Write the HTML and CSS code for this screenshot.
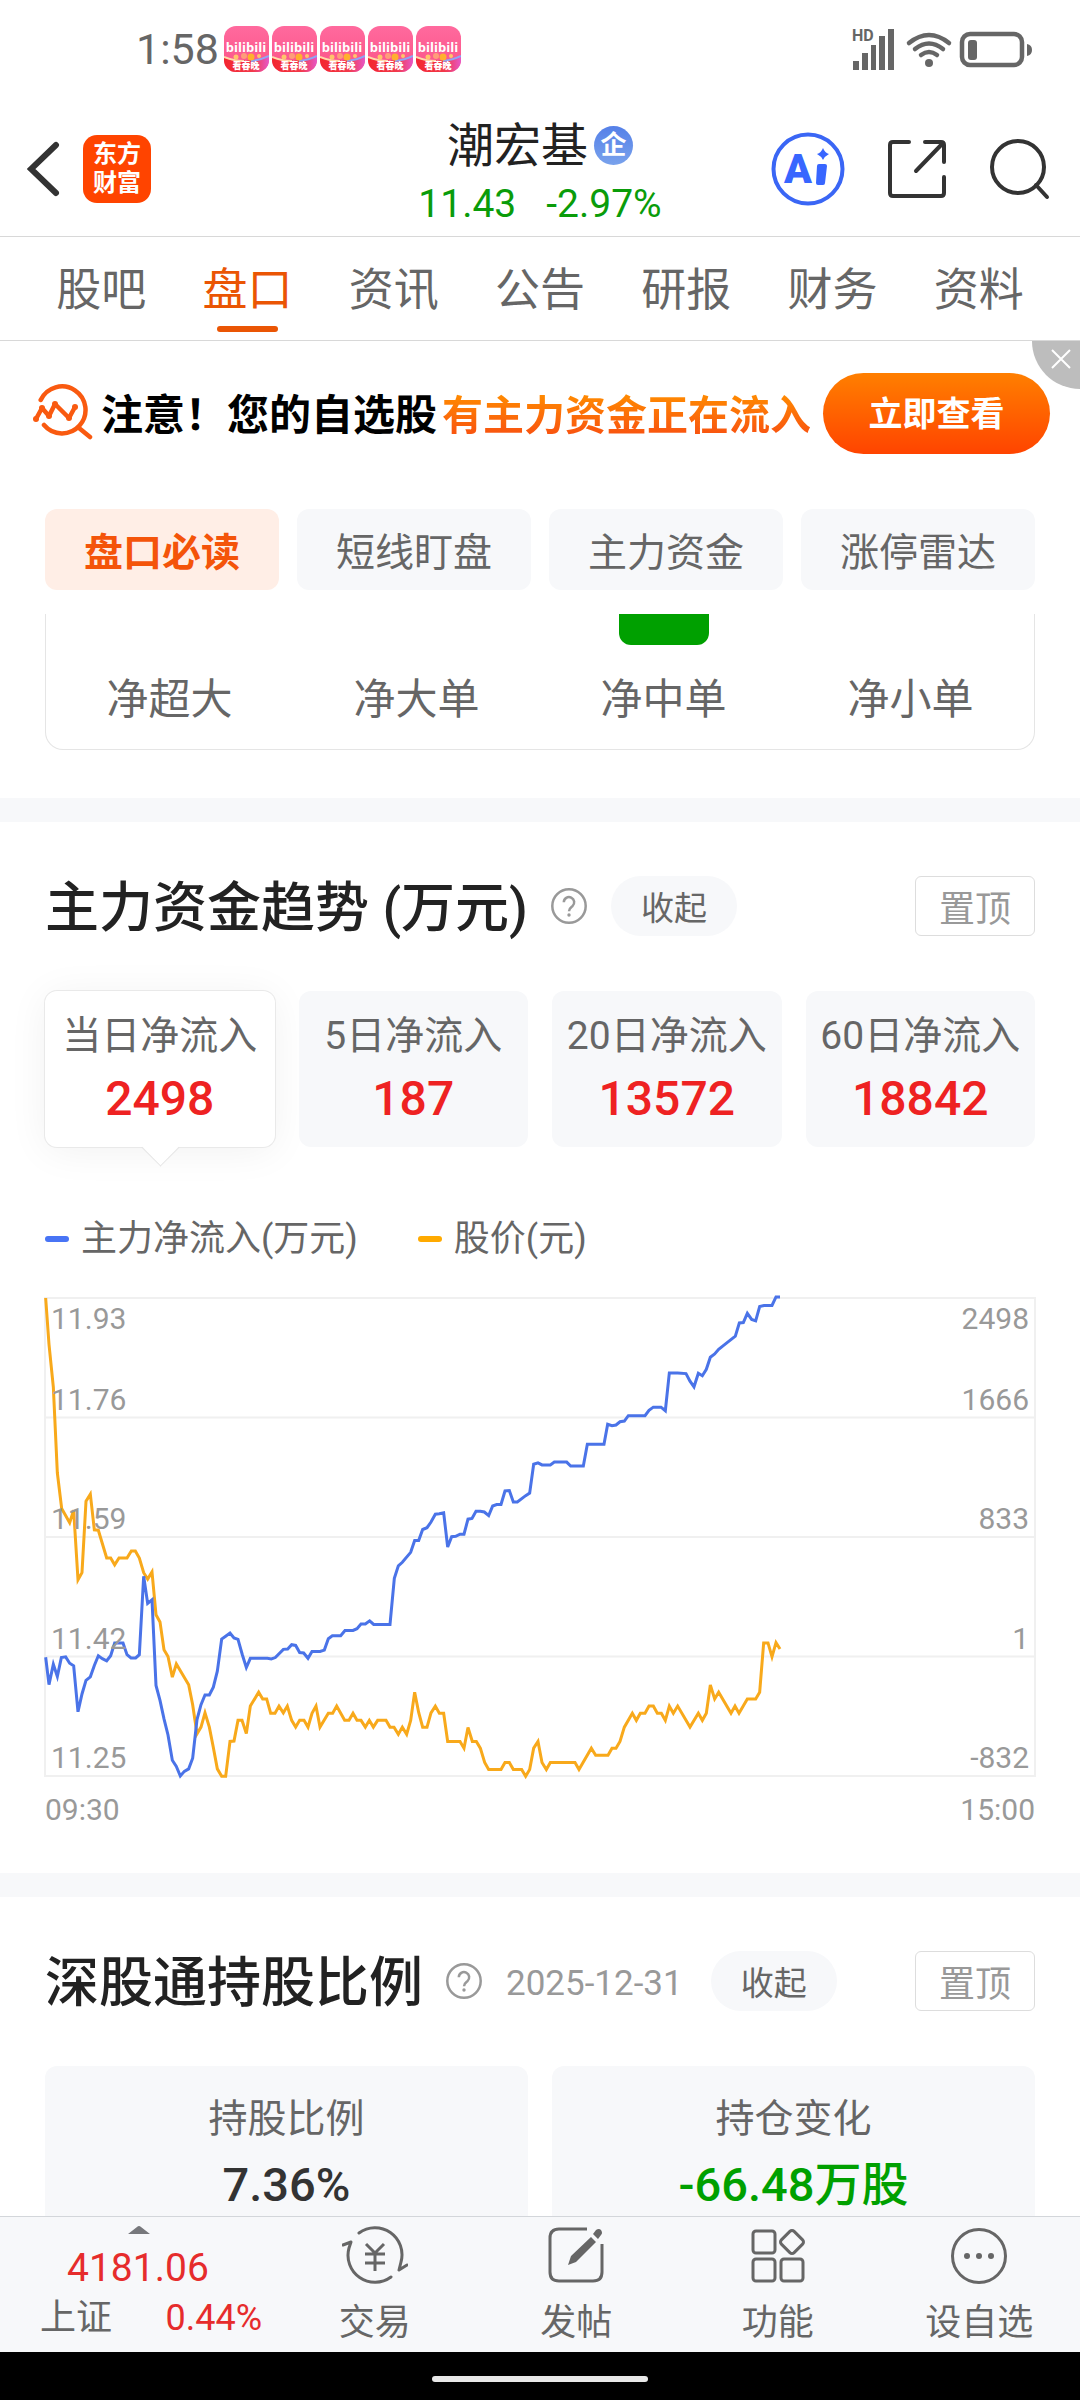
FILE: index.html
```html
<!DOCTYPE html>
<html lang="zh-CN">
<head>
    <meta charset="UTF-8">
    <meta name="viewport" content="width=device-width, initial-scale=1">
    <title>潮宏基 - 盘口</title>
    <link rel="stylesheet" href="styles.css">
</head>
<body>
<svg class="defs" aria-hidden="true">
    <defs>
        <linearGradient id="bili-pink" x1="0" y1="0" x2="0" y2="1">
            <stop offset="0" stop-color="#ff6a9e"/>
            <stop offset="1" stop-color="#fb5287"/>
        </linearGradient>
        <linearGradient id="bili-red" x1="0" y1="0" x2="1" y2="0">
            <stop offset="0" stop-color="#f3262f"/>
            <stop offset="0.65" stop-color="#f23a4c"/>
            <stop offset="1" stop-color="#e657c8"/>
        </linearGradient>
        <clipPath id="bili-clip"><rect width="45" height="46" rx="12"/></clipPath>
        <symbol id="bili" viewBox="0 0 45 46">
            <g clip-path="url(#bili-clip)">
                <rect width="45" height="46" fill="url(#bili-pink)"/>
                <path d="M0 31Q22 38 45 31V46H0Z" fill="url(#bili-red)"/>
                <path d="M0 31Q10 35 20 35" fill="none" stroke="#ffd9a8" stroke-width="2"/>
                <path d="M27 35Q37 34 45 30" fill="none" stroke="#8fa4f4" stroke-width="2"/>
                <circle cx="12" cy="31" r="2.5" fill="#ffc46b"/>
                <circle cx="20" cy="30" r="3" fill="#ff9c7a"/>
                <circle cx="27" cy="31" r="3.5" fill="#ffb02e"/>
                <circle cx="35" cy="30" r="2" fill="#ffc46b"/>
                <text class="bili-name" x="22" y="26">bilibili</text>
                <text class="bili-tag" x="22" y="43">看春晚</text>
            </g>
        </symbol>
        <symbol id="help" viewBox="0 0 36 36">
            <circle cx="18" cy="18" r="16.7" fill="none" stroke="#999" stroke-width="2.5"/>
            <path d="M12.8 14.2a5.2 5.2 0 1 1 8.6 4c-2 1.600-3.400 2.500-3.400 5" fill="none" stroke="#999" stroke-width="2.5"/>
            <circle cx="18" cy="27" r="1.7" fill="#999"/>
        </symbol>
    </defs>
</svg>

<div class="app">
    <div class="status">
        <span class="clock">1:58</span>
        <div class="notices">
            <svg class="bili"><use href="#bili"/></svg>
            <svg class="bili"><use href="#bili"/></svg>
            <svg class="bili"><use href="#bili"/></svg>
            <svg class="bili"><use href="#bili"/></svg>
            <svg class="bili"><use href="#bili"/></svg>
        </div>
        <svg class="signals" viewBox="0 0 182 44" aria-hidden="true">
            <g fill="#666">
                <text class="hd" x="0" y="14">HD</text>
                <path d="M1 34h6v9H1zM10 26h6v17h-6zM19 18h5v25h-5zM27 9h6v34h-6zM36 2h6v41h-6z"/>
                <circle cx="77" cy="36" r="4"/>
                <rect x="116" y="13" width="9" height="20" rx="3"/>
                <path d="M175 17q5 1 5 6t-5 6z"/>
            </g>
            <g fill="none" stroke="#666" stroke-width="4.5" stroke-linecap="round">
                <path d="M57 16q20-16 40 0M63 22q14-11 28 0M69 28q8-6 16 0"/>
                <rect x="110" y="7" width="60" height="31" rx="8"/>
            </g>
        </svg>
    </div>

    <header class="header">
        <div class="header-left">
            <button class="icon-btn" aria-label="返回">
                <svg width="34" height="60" viewBox="0 0 34 60"><path d="M29 6 4 30l25 24" fill="none" stroke="#333" stroke-width="6" stroke-linecap="round"/></svg>
            </button>
            <a class="logo" href="#"><span>东方</span><span>财富</span></a>
        </div>
        <div class="stock">
            <h1 class="stock-name">潮宏基<span class="stock-badge">企</span></h1>
            <p class="stock-price"><span>11.43</span><span>-2.97%</span></p>
        </div>
        <div class="header-right">
            <button class="icon-btn" aria-label="智能助手">
                <svg width="74" height="74" viewBox="0 0 74 74">
                    <circle cx="37" cy="37" r="34.5" fill="none" stroke="#3a66f5" stroke-width="4"/>
                    <text class="ai" x="13" y="51">A</text>
                    <path d="M48 32h6q2 0 2 2l-2 17q0 2-2 2h-5q-2 0-2-2l1-17q0-2 2-2zM52 16q2 5 6 6-4 2-6 6-2-4-6-6 4-1 6-6z" fill="#3866ff"/>
                </svg>
            </button>
            <button class="icon-btn" aria-label="分享">
                <svg width="60" height="60" viewBox="0 0 60 60" fill="none" stroke="#333" stroke-width="4" stroke-linecap="round" stroke-linejoin="round">
                    <path d="M22 3H6Q3 3 3 6v48q0 3 3 3h48q3 0 3-3V38M38 3h16q3 0 3 3v17M56 4 29 32"/>
                </svg>
            </button>
            <button class="icon-btn" aria-label="搜索">
                <svg width="62" height="62" viewBox="0 0 62 62" fill="none" stroke="#333" stroke-width="4" stroke-linecap="round">
                    <circle cx="29" cy="29" r="26"/><path d="m47 47 11 12"/>
                </svg>
            </button>
        </div>
    </header>

    <nav class="tabs">
        <a class="tab" href="#">股吧</a>
        <a class="tab active" href="#">盘口</a>
        <a class="tab" href="#">资讯</a>
        <a class="tab" href="#">公告</a>
        <a class="tab" href="#">研报</a>
        <a class="tab" href="#">财务</a>
        <a class="tab" href="#">资料</a>
    </nav>

    <main class="content">
        <div class="banner">
            <svg class="banner-icon" viewBox="0 0 60 60" aria-hidden="true">
                <g fill="none" stroke="#f95a10" stroke-width="4.5" stroke-linecap="round" stroke-linejoin="round">
                    <path d="M7.7 17A23.5 23.5 0 1 1 11 42M46 45l11 9"/>
                    <path d="M3 36 9 25l7 8 6-12 14 14 6-11"/>
                </g>
                <g fill="#f95a10"><circle cx="3" cy="36" r="3"/><circle cx="9" cy="25" r="3"/><circle cx="16" cy="33" r="3"/><circle cx="22" cy="21" r="3"/><circle cx="36" cy="35" r="3"/><circle cx="42" cy="24" r="3"/></g>
            </svg>
            <p class="banner-text">注意！您的自选股</p>
            <p class="banner-text hot">有主力资金正在流入</p>
            <button class="banner-btn">立即查看</button>
            <button class="banner-close" aria-label="关闭">
                <svg width="20" height="20" viewBox="0 0 20 20"><path d="m1 1 18 18M19 1 1 19" stroke="#fff" stroke-width="2"/></svg>
            </button>
        </div>

        <div class="pills">
            <button class="pill active">盘口必读</button>
            <button class="pill">短线盯盘</button>
            <button class="pill">主力资金</button>
            <button class="pill">涨停雷达</button>
        </div>

        <div class="orders">
            <div class="order">净超大</div>
            <div class="order">净大单</div>
            <div class="order"><span class="order-bar"></span>净中单</div>
            <div class="order">净小单</div>
        </div>

        <section class="section">
            <div class="section-head">
                <h2>主力资金趋势 (万元)</h2>
                <svg class="help"><use href="#help"/></svg>
                <button class="fold">收起</button>
                <button class="pin">置顶</button>
            </div>

            <div class="flows">
                <button class="flow active"><span>当日净流入</span><b>2498</b></button>
                <button class="flow"><span>5日净流入</span><b>187</b></button>
                <button class="flow"><span>20日净流入</span><b>13572</b></button>
                <button class="flow"><span>60日净流入</span><b>18842</b></button>
            </div>

            <div class="legend">
                <span class="legend-item inflow">主力净流入(万元)</span>
                <span class="legend-item price">股价(元)</span>
            </div>

            <div class="chart">
                <svg class="chart-lines" viewBox="45 50 2970 1340" preserveAspectRatio="none">
                    <path class="grid-line" d="M45 50H3015V1390H45ZM45 385H3015M45 720H3015M45 1055H3015"/>
                    <polyline class="line price-line" points="47,50 57,180 70,300 82,540 95,640 119,680 131,645 144,840 156,820 168,620 181,600 193,700 205,701 230,779 242,779 254,798 267,779 291,779 304,759 316,759 328,779 341,820 353,838 366,818 378,938 390,958 402,1036 414,1055 427,1113 439,1076 476,1134 488,1190 501,1272 513,1253 525,1213 538,1253 550,1310 562,1370 575,1391 587,1391 600,1293 612,1292 624,1234 636,1234 649,1271 661,1194 686,1155 698,1174 710,1174 722,1214 735,1214 747,1194 760,1213 772,1194 785,1234 797,1253 809,1234 822,1234 834,1253 846,1214 858,1194 870,1253 895,1214 908,1214 920,1194 944,1234 957,1234 969,1214 981,1234 993,1234 1006,1253 1018,1234 1030,1253 1043,1234 1068,1234 1080,1253 1092,1253 1105,1273 1117,1253 1130,1273 1142,1234 1154,1155 1166,1212 1178,1253 1191,1253 1203,1213 1216,1194 1228,1214 1241,1214 1253,1293 1290,1293 1302,1312 1314,1254 1327,1293 1339,1293 1351,1312 1364,1352 1376,1372 1413,1372 1425,1352 1438,1352 1450,1372 1475,1372 1487,1391 1499,1372 1511,1312 1524,1293 1536,1352 1549,1372 1561,1352 1635,1352 1647,1372 1684,1312 1697,1332 1734,1332 1746,1312 1758,1312 1770,1293 1783,1253 1807,1214 1819,1234 1831,1214 1845,1214 1857,1194 1870,1194 1882,1214 1894,1214 1906,1234 1918,1194 1930,1214 1943,1194 1980,1253 2005,1214 2017,1234 2029,1214 2041,1135 2054,1174 2066,1155 2103,1214 2115,1194 2127,1214 2152,1174 2177,1174 2189,1155 2201,1017 2214,1017 2226,1056 2238,1016 2250,1034"/>
                    <polyline class="line inflow-line" points="47,1057 57,1134 70,1077 82,1111 94,1058 107,1056 119,1074 131,1081 144,1210 156,1160 168,1122 181,1112 193,1080 205,1053 217,1061 230,1067 242,1053 254,1017 279,1017 291,1050 303,1059 317,1059 328,1050 341,830 353,906 366,896 378,1136 390,1178 402,1230 414,1275 427,1346 439,1363 451,1390 463,1377 476,1370 488,1340 501,1232 513,1190 525,1163 538,1163 550,1141 562,1096 575,1006 587,998 600,989 612,1003 624,1007 637,1050 649,1086 661,1060 712,1060 724,1062 736,1058 760,1035 773,1034 785,1022 797,1024 809,1044 821,1045 834,1060 846,1041 870,1041 883,1037 895,1005 907,997 932,997 945,982 969,982 981,977 993,964 1006,964 1019,955 1031,965 1080,965 1093,836 1105,801 1117,791 1142,763 1154,730 1166,730 1178,699 1191,694 1203,678 1216,656 1228,655 1241,652 1253,748 1265,719 1277,718 1290,712 1302,712 1314,670 1326,668 1338,648 1351,648 1363,650 1376,660 1388,633 1400,629 1413,629 1425,591 1438,590 1450,622 1462,622 1487,604 1499,597 1511,516 1524,512 1536,518 1561,518 1573,510 1610,510 1622,521 1660,521 1672,460 1722,460 1733,404 1746,408 1758,406 1770,397 1783,395 1795,380 1845,380 1857,365 1870,356 1893,356 1906,366 1918,260 1943,260 1968,262 1980,283 1992,299 2005,261 2017,268 2029,250 2041,216 2054,207 2066,194 2079,184 2116,157 2128,120 2140,119 2152,93 2165,110 2177,114 2189,74 2202,71 2226,71 2238,47 2250,47"/>
                </svg>
                <div class="chart-labels">
                    <div class="chart-row"><span>11.93</span><span>2498</span></div>
                    <div class="chart-row"><span>11.76</span><span>1666</span></div>
                    <div class="chart-row"><span>11.59</span><span>833</span></div>
                    <div class="chart-row"><span>11.42</span><span>1</span></div>
                    <div class="chart-row"><span>11.25</span><span>-832</span></div>
                </div>
            </div>
            <div class="times"><span>09:30</span><span>15:00</span></div>
        </section>

        <section class="section">
            <div class="section-head">
                <h2>深股通持股比例</h2>
                <svg class="help"><use href="#help"/></svg>
                <time class="date">2025-12-31</time>
                <button class="fold">收起</button>
                <button class="pin">置顶</button>
            </div>
            <div class="holdings">
                <div class="holding"><span>持股比例</span><b>7.36%</b></div>
                <div class="holding down"><span>持仓变化</span><b>-66.48万股</b></div>
            </div>
        </section>
    </main>

    <footer class="toolbar">
        <a class="index" href="#">
            <svg width="22" height="8" viewBox="0 0 22 8"><path d="M0 8 9 1q2-2 4 0l9 7z" fill="#77787c"/></svg>
            <span class="index-value">4181.06</span>
            <span class="index-row"><span class="index-name">上证</span><span>0.44%</span></span>
        </a>
        <a class="tool" href="#">
            <svg width="66" height="60" viewBox="0 0 66 60" fill="none" stroke="#666" stroke-width="3" stroke-linecap="round" stroke-linejoin="round">
                <path d="M17 7A27 27 0 0 1 59 36L57 44l8-5M1 19l8-3-2 6A27 27 0 0 0 49 51"/>
                <path d="m24 18 9 9 9-9M23 28h20M23 37h20M33 27v18" stroke-linecap="butt"/>
            </svg>
            <span>交易</span>
        </a>
        <a class="tool" href="#">
            <svg width="60" height="60" viewBox="0 0 60 60">
                <path d="M41 3H13Q4 3 4 12v34q0 9 9 9h34q9 0 9-9V18" fill="none" stroke="#666" stroke-width="3"/>
                <path d="m22 39 3-9 20-19 5 5-20 20zM47 8l3-4q3-2 5 0 2 3 0 5l-3 4z" fill="#666"/>
            </svg>
            <span>发帖</span>
        </a>
        <a class="tool" href="#">
            <svg width="60" height="60" viewBox="0 0 60 60" fill="none" stroke="#666" stroke-width="3">
                <rect x="5" y="5" width="22" height="22" rx="3"/>
                <rect x="5" y="33" width="22" height="22" rx="3"/>
                <rect x="33" y="33" width="22" height="22" rx="3"/>
                <rect x="35" y="7" width="18" height="18" rx="3" transform="rotate(45 44 16)"/>
            </svg>
            <span>功能</span>
        </a>
        <a class="tool" href="#">
            <svg width="60" height="60" viewBox="0 0 60 60">
                <circle cx="30" cy="30" r="26.5" fill="none" stroke="#666" stroke-width="3"/>
                <g fill="#666"><circle cx="18" cy="30" r="3"/><circle cx="30" cy="30" r="3"/><circle cx="42" cy="30" r="3"/></g>
            </svg>
            <span>设自选</span>
        </a>
    </footer>
    <div class="home-bar"><span></span></div>
</div>
</body>
</html>
```

FILE: styles.css
```css
* {
    box-sizing: border-box;
}

body {
    margin: 0;
    font-family: Roboto, "Noto Sans CJK SC", sans-serif;
    color: #666;
    background: #fff;
}

h1, h2, p {
    margin: 0;
    font-weight: 400;
}

a {
    color: inherit;
    text-decoration: none;
}

button {
    border: none;
    padding: 0;
    background: none;
    font-family: inherit;
    color: inherit;
}

svg {
    display: block;
    flex: none;
}

.defs {
    position: absolute;
    width: 0;
    height: 0;
}

.app {
    height: 100vh;
    display: flex;
    flex-direction: column;
}

/* status bar */

.status {
    flex: none;
    height: 98px;
    padding: 0 46px 0 136px;
    display: flex;
    align-items: center;
}

.clock {
    font-size: 43px;
}

.notices {
    flex: 1;
    display: flex;
    gap: 3px;
    margin-left: 5px;
}

.bili {
    width: 45px;
    height: 46px;
}

.bili-name {
    font-family: "Open Sans", sans-serif;
    font-size: 13px;
    font-weight: 700;
    fill: #fff;
    text-anchor: middle;
}

.bili-tag {
    font-family: "Noto Sans CJK SC", sans-serif;
    font-size: 9px;
    font-weight: 900;
    fill: #fff;
    text-anchor: middle;
}

.signals {
    width: 182px;
    height: 44px;
    overflow: visible;
}

.hd {
    font-size: 16px;
    font-weight: 700;
}

/* header */

.header {
    flex: none;
    height: 139px;
    padding: 4px 29px 0 27px;
    display: grid;
    grid-template-columns: 1fr auto 1fr;
    align-items: center;
    border-bottom: 1px solid #d8d8d8;
}

.header-left, .header-right {
    display: flex;
    align-items: center;
}

.header-left {
    gap: 22px;
}

.header-right {
    gap: 42px;
    justify-content: flex-end;
}

.logo {
    width: 68px;
    height: 68px;
    border-radius: 14px;
    background: #ff4400;
    color: #fff;
    font-size: 24px;
    font-weight: 700;
    line-height: 29px;
    display: flex;
    flex-direction: column;
    align-items: center;
    justify-content: center;
}

.stock {
    padding: 9px 0 0 2px;
    text-align: center;
}

.stock-name {
    display: flex;
    align-items: center;
    justify-content: center;
    gap: 6px;
    font-size: 47px;
    line-height: 60px;
    color: #222;
}

.stock-badge {
    width: 39px;
    height: 39px;
    border-radius: 50%;
    background: linear-gradient(#5580e8, #79a2ec);
    color: #fff;
    font-size: 26px;
    font-weight: 700;
    line-height: 39px;
}

.stock-price {
    display: flex;
    justify-content: center;
    gap: 30px;
    font-size: 39px;
    line-height: 56px;
    color: #0a9c0a;
}

.ai {
    font-size: 41px;
    font-weight: 900;
    fill: #3866ff;
}

/* tabs */

.tabs {
    flex: none;
    height: 104px;
    padding: 0 28px;
    display: flex;
    border-bottom: 1px solid #d8d8d8;
}

.tab {
    flex: 1;
    display: flex;
    flex-direction: column;
    align-items: center;
    padding-top: 22px;
    gap: 3px;
    font-size: 45px;
    line-height: 64px;
}

.tab.active {
    color: #ea5504;
}

.tab.active::after {
    content: "";
    width: 61px;
    height: 6px;
    border-radius: 3px;
    background: #ea5504;
}

.content {
    flex: 1;
    min-height: 0;
    overflow: hidden;
}

/* banner */

.banner {
    position: relative;
    height: 144px;
    padding: 0 30px 0 33px;
    display: flex;
    align-items: center;
}

.banner-icon {
    width: 60px;
    height: 60px;
    margin-right: 8px;
}

.banner-text {
    padding-top: 6px;
    font-size: 42px;
    font-weight: 700;
    line-height: 60px;
    color: #000;
    white-space: nowrap;
}

.banner-text.hot {
    margin: 0 auto 0 5px;
    font-size: 41px;
    background: linear-gradient(#ff8c00 20%, #f9560f 80%);
    background-clip: text;
    -webkit-background-clip: text;
    color: transparent;
}

.banner-btn {
    width: 227px;
    height: 81px;
    padding-bottom: 4px;
    border-radius: 41px;
    background: linear-gradient(#ff7f00, #ff4400);
    color: #fff;
    font-size: 34px;
    font-weight: 700;
}

.banner-close {
    position: absolute;
    top: 0;
    right: 0;
    width: 48px;
    height: 48px;
    padding: 0 0 12px 10px;
    border-bottom-left-radius: 48px;
    background: #bdbdbd;
    display: flex;
    align-items: center;
    justify-content: center;
}

/* sub tabs */

.pills {
    padding: 24px 45px;
    display: flex;
    gap: 18px;
}

.pill {
    flex: 1;
    height: 81px;
    padding-bottom: 2px;
    border-radius: 12px;
    background: #f7f8fa;
    font-size: 39px;
}

.pill.active {
    background: #ffeee6;
    color: #f4540a;
    font-weight: 700;
}

.orders {
    height: 136px;
    margin: 0 45px 48px;
    display: flex;
    border: 1px solid #e5e5e5;
    border-top: none;
    border-radius: 0 0 18px 18px;
}

.order {
    flex: 1;
    display: flex;
    flex-direction: column;
    justify-content: flex-end;
    align-items: center;
    padding-bottom: 19px;
    font-size: 42px;
    line-height: 60px;
}

.order-bar {
    width: 90px;
    height: 31px;
    margin-bottom: auto;
    border-radius: 0 0 12px 12px;
    background: #00a000;
}

/* sections */

.section {
    padding: 54px 45px 45px;
    border-top: 24px solid #f7f8fa;
}

.section-head {
    display: flex;
    align-items: center;
    height: 60px;
    margin-bottom: 55px;
}

.section-head h2 {
    padding-top: 6px;
    font-size: 54px;
    font-weight: 500;
    line-height: 60px;
    color: #222;
}

.help {
    width: 36px;
    height: 36px;
    margin: 0 24px 0 23px;
}

.date {
    padding-top: 4px;
    margin-right: 28px;
    font-size: 35px;
    color: #999;
}

.fold {
    width: 126px;
    height: 60px;
    border-radius: 30px;
    background: #f7f8fa;
    font-size: 33px;
}

.pin {
    width: 120px;
    height: 60px;
    margin-left: auto;
    border: 1px solid #ddd;
    border-radius: 6px;
    font-size: 36px;
    color: #999;
}

.flows {
    display: flex;
    gap: 24px;
}

.flow {
    position: relative;
    flex: 1;
    height: 156px;
    border-radius: 12px;
    background: #f7f8fa;
    display: flex;
    flex-direction: column;
    align-items: center;
    justify-content: center;
}

.flow span {
    font-size: 39px;
    line-height: 60px;
    white-space: nowrap;
}

.flow b {
    font-size: 48px;
    font-weight: 500;
    line-height: 66px;
    color: #ee2222;
}

.flow.active {
    background: #fff;
    box-shadow: 0 0 0 1px #e9e9e9, 0 4px 40px rgba(0, 0, 0, 0.06);
}

.flow.active::after {
    content: "";
    position: absolute;
    top: 100%;
    left: 50%;
    width: 26px;
    height: 26px;
    margin: -13px 0 0 -13px;
    border: solid #e5e5e5;
    border-width: 0 1px 1px 0;
    background: linear-gradient(135deg, transparent 50%, #fff 50%);
    transform: rotate(45deg);
}

.legend {
    display: flex;
    gap: 60px;
    margin: 68px 0 35px;
    font-size: 36px;
    line-height: 48px;
}

.legend-item {
    display: flex;
    align-items: center;
    gap: 12px;
}

.legend-item::before {
    content: "";
    width: 24px;
    height: 6px;
    border-radius: 3px;
    background: #4874f5;
}

.legend-item.price::before {
    background: #ffaa00;
}

.chart {
    position: relative;
    height: 478px;
}

.chart-lines {
    width: 100%;
    height: 100%;
    overflow: visible;
}

.chart-lines > * {
    fill: none;
    vector-effect: non-scaling-stroke;
}

.grid-line {
    stroke: #f0f0f0;
    stroke-width: 2;
}

.line {
    stroke-width: 3;
}

.price-line {
    stroke: #f8a91b;
}

.inflow-line {
    stroke: #4a73e8;
}

/* labels lie over the lines, each at the bottom of its grid row */
.chart-labels {
    position: absolute;
    inset: 0;
    display: grid;
    grid-template-rows: 0 repeat(4, 1fr);
    font-size: 30px;
    line-height: 36px;
    color: #999;
}

.chart-row {
    display: flex;
    justify-content: space-between;
    align-items: flex-end;
    padding: 0 6px;
}

.chart-row:first-child {
    align-items: flex-start;
    padding-top: 3px;
}

.times {
    display: flex;
    justify-content: space-between;
    margin-top: 16px;
    font-size: 30px;
    line-height: 36px;
    color: #999;
}

.holdings {
    display: flex;
    gap: 24px;
}

.holding {
    flex: 1;
    padding: 23px 0;
    border-radius: 12px;
    background: #f7f8fa;
    display: flex;
    flex-direction: column;
    align-items: center;
    font-size: 39px;
    line-height: 60px;
}

.holding b {
    height: 96px;
    font-size: 47px;
    font-weight: 500;
    line-height: 72px;
    color: #333;
}

.holding.down b {
    color: #00a000;
}

/* bottom toolbar */

.toolbar {
    flex: none;
    height: 136px;
    display: flex;
    border-top: 1px solid #d3d6da;
    background: #f7f8fa;
}

.index {
    width: 274px;
    padding: 9px 12px 0 40px;
    display: flex;
    flex-direction: column;
    color: #e62c2c;
}

.index svg {
    margin-left: 88px;
}

.index-value {
    margin-left: 27px;
    font-size: 39px;
    line-height: 68px;
}

.index-row {
    display: flex;
    justify-content: space-between;
    align-items: center;
    font-size: 36px;
    line-height: 32px;
}

.index-name {
    color: #666;
}

.tool {
    flex: 1;
    display: flex;
    flex-direction: column;
    align-items: center;
    gap: 12px;
    padding-top: 9px;
    font-size: 36px;
    line-height: 50px;
}

.home-bar {
    flex: none;
    height: 48px;
    display: flex;
    align-items: center;
    justify-content: center;
    background: #000;
}

.home-bar span {
    width: 20%;
    height: 6px;
    margin-top: 6px;
    border-radius: 3px;
    background: #e8e8e8;
}
```
